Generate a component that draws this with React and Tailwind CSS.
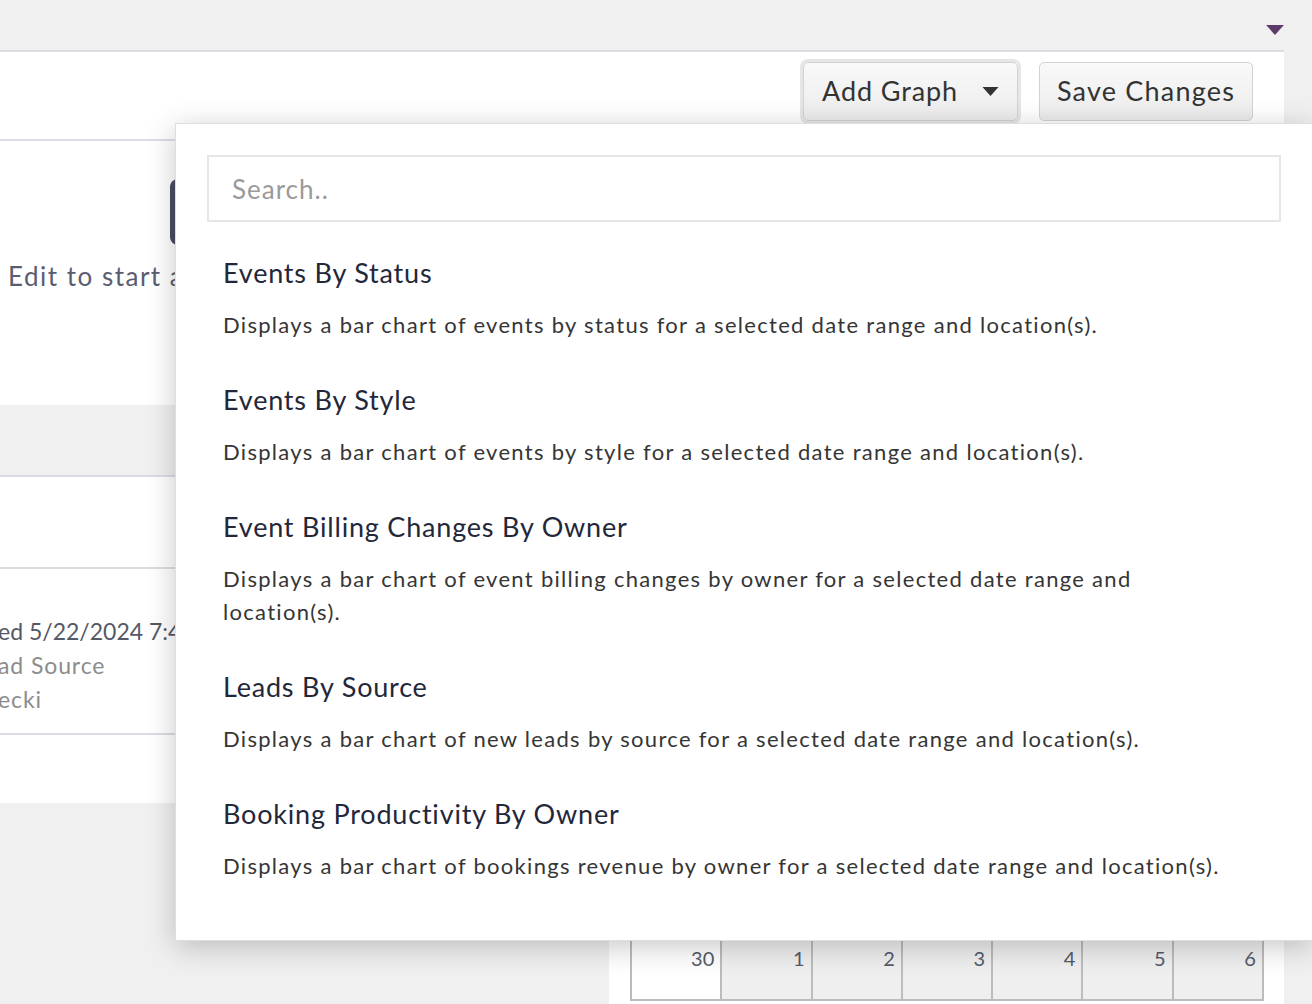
import React, { useState } from "react";

const graphOptions = [
  {
    title: "Events By Status",
    description:
      "Displays a bar chart of events by status for a selected date range and location(s).",
  },
  {
    title: "Events By Style",
    description:
      "Displays a bar chart of events by style for a selected date range and location(s).",
  },
  {
    title: "Event Billing Changes By Owner",
    description:
      "Displays a bar chart of event billing changes by owner for a selected date range and location(s).",
  },
  {
    title: "Leads By Source",
    description:
      "Displays a bar chart of new leads by source for a selected date range and location(s).",
  },
  {
    title: "Booking Productivity By Owner",
    description:
      "Displays a bar chart of bookings revenue by owner for a selected date range and location(s).",
  },
];

const weekDays = [30, 1, 2, 3, 4, 5, 6];

const Caret = ({ className }) => (
  <svg className={className} viewBox="0 0 16 9" fill="currentColor">
    <path d="M0 0h16L8 9z" />
  </svg>
);

const GraphMenu = ({ search, setSearch }) => {
  const items = graphOptions.filter((o) =>
    o.title.toLowerCase().includes(search.toLowerCase())
  );
  return (
    <div className="absolute left-[175px] top-[123px] w-[1138px] h-[818px] bg-white border border-[#dedede] shadow-[0_6px_28px_rgba(0,0,0,0.22)] px-[31px] pt-[31px]">
      <input
        value={search}
        onChange={(e) => setSearch(e.target.value)}
        placeholder="Search.."
        className="w-full h-[67px] border-2 border-[#e6e6e6] px-[23px] text-[26px] tracking-[1px] text-[#333] placeholder:text-[#9a9a9a] outline-none"
      />
      <div className="pt-[33px] pl-[16px] pr-[36px]">
        {items.map((item) => (
          <button key={item.title} className="block text-left w-full mb-[41px]">
            <div className="text-[27px] leading-[36px] tracking-[0.8px] text-[#23273a]">
              {item.title}
            </div>
            <div className="mt-[17px] text-[22px] leading-[33px] tracking-[1.3px] text-[#353535]">
              {item.description}
            </div>
          </button>
        ))}
      </div>
    </div>
  );
};

export default function App() {
  const [menuOpen, setMenuOpen] = useState(true);
  const [search, setSearch] = useState("");

  return (
    <div className="relative w-[1312px] h-[1004px] overflow-hidden bg-[#f0f0f0] font-['Lato',sans-serif]">
      {/* top bar */}
      <div className="h-[50px] flex justify-end items-center pr-[28px]">
        <Caret className="w-[18px] h-[10px] text-[#5c3b6c] mt-[10px]" />
      </div>

      <div className="w-[1284px] bg-white border-t-2 border-[#dcdce2]">
        {/* toolbar */}
        <div className="h-[89px] flex justify-end items-start gap-[21px] pt-[10px] pr-[31px] border-b-2 border-[#dcdce2]">
          <button
            onClick={() => setMenuOpen(!menuOpen)}
            className="h-[59px] w-[215px] flex items-center justify-between pl-[18px] pr-[18px] rounded-[5px] border border-[#d2d2d2] bg-gradient-to-b from-[#f9f9f9] to-[#ececec] ring-[3px] ring-[#e6e6e6] text-[27px] tracking-[0.9px] text-[#333]"
          >
            Add Graph
            <Caret className="w-[17px] h-[9px] text-[#333]" />
          </button>
          <button className="h-[59px] w-[214px] rounded-[5px] border border-[#d2d2d2] bg-gradient-to-b from-[#f9f9f9] to-[#ececec] text-[27px] tracking-[1.2px] text-[#333]">
            Save Changes
          </button>
        </div>

        {/* empty dashboard hint */}
        <div className="h-[264px] pt-[38px]">
          <div className="pl-[170px]">
            <div className="w-[130px] h-[66px] rounded-[8px] bg-[#4b4e60]" />
          </div>
          <div className="mt-[13px] pl-[8px] text-[26px] leading-[36px] tracking-[1.5px] text-[#5a5d6f] whitespace-nowrap">
            Edit to start adding graphs to this dashboard.
          </div>
        </div>

        {/* list */}
        <div className="h-[72px] bg-[#f0f0f0] border-b-2 border-[#dcdce2]" />
        <div className="h-[92px] border-b-2 border-[#dcdce2]" />
        <div className="h-[166px] border-b-2 border-[#dcdce2] pt-[45px] -ml-[2px] text-[23px] leading-[34px] whitespace-nowrap">
          <div className="text-[#555866]">ed 5/22/2024 7:45 PM</div>
          <div className="text-[#8c8c8c] tracking-[0.9px]">ad Source</div>
          <div className="text-[#8c8c8c] tracking-[0.9px]">ecki</div>
        </div>
        <div className="h-[68px]" />
      </div>

      {/* calendar card */}
      <div className="mt-[24px] ml-[609px] w-[675px] h-[200px] bg-white pt-[112px] pl-[21px]">
        <div className="flex w-[634px] border-2 border-[#bcbcbc]">
          {weekDays.map((d, i) => (
            <div
              key={d}
              className={`flex-1 h-[58px] flex justify-end pr-[6px] pt-[2px] text-[20px] text-[#555a6a] ${
                i === 0 ? "bg-white" : "bg-[#efefef] border-l-2 border-[#bcbcbc]"
              }`}
            >
              {d}
            </div>
          ))}
        </div>
      </div>

      {menuOpen && <GraphMenu search={search} setSearch={setSearch} />}
    </div>
  );
}
